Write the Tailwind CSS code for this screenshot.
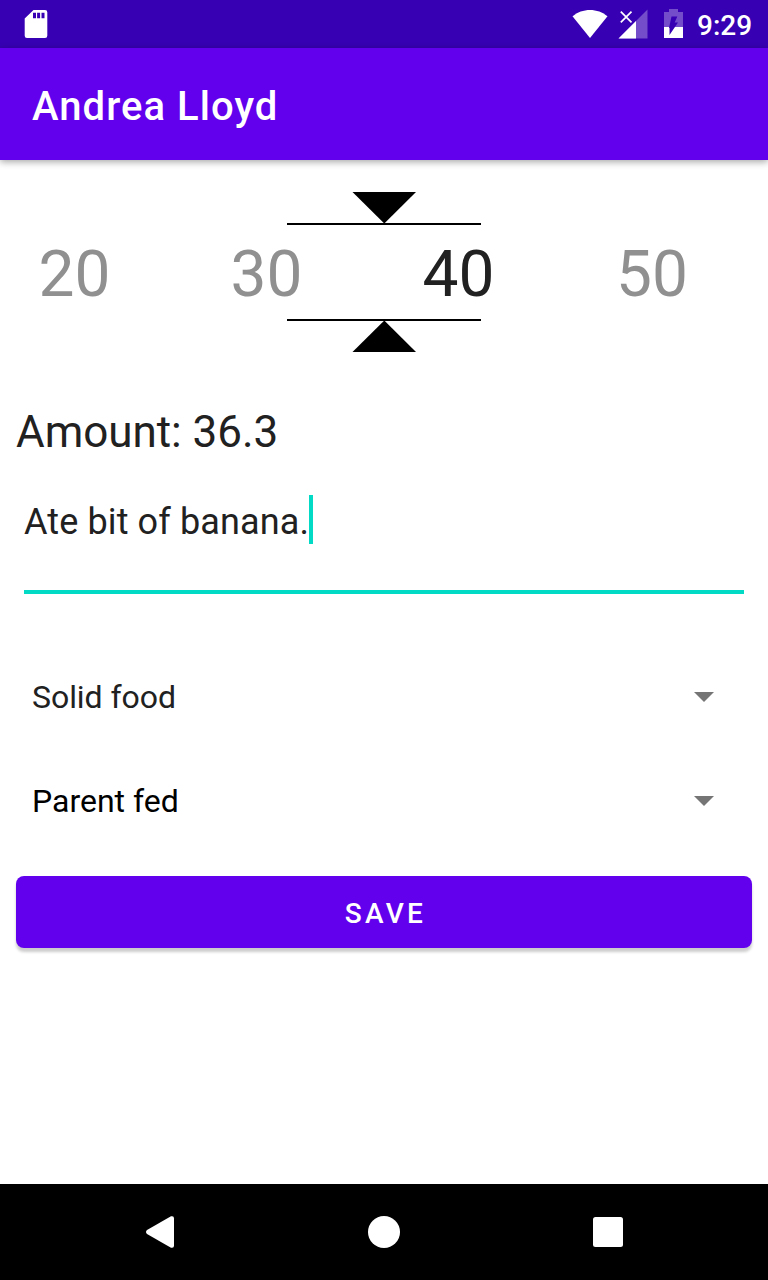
<!DOCTYPE html>
<html lang="en">
<head>
<meta charset="utf-8">
<title>Andrea Lloyd</title>
<script src="https://cdn.jsdelivr.net/npm/@tailwindcss/browser@4"></script>
</head>
<body class="flex h-[1280px] w-[768px] flex-col overflow-hidden bg-white font-['Roboto',sans-serif] text-[#212121]">
  <!-- Status bar -->
  <div class="flex h-12 shrink-0 items-center justify-between bg-[#3700b3] pr-[15px] pl-6 text-white">
    <svg class="h-12 w-6" viewBox="0 0 24 48" fill="currentColor"><path fill-rule="evenodd" d="M9.5 10H21a2.300 2.300 0 0 1 2.300 2.300V35.700A2.300 2.300 0 0 1 21 38H3a2.300 2.300 0 0 1-2.300-2.300V18.500ZM9 12.700v5.600h3v-5.600ZM13.100 12.700v5.600h3v-5.600ZM17.500 12.700v5.600h3v-5.600Z"/></svg>
    <div class="flex items-center">
      <svg class="h-12 w-[125px]" viewBox="572 0 125 48" fill="currentColor">
        <path d="M572.500 16.300C582 7.800 598 7.800 607.500 16.300L590 38Z"/>
        <path opacity=".3" d="M647.500 9.500V38.500H618.500Z"/>
        <path d="M636 21V38.500H618.500Z"/>
        <path d="M620.800 11.700L631.500 22.400M631.500 11.700L620.800 22.400" stroke="currentColor" stroke-width="1.700" fill="none"/>
        <path opacity=".3" d="M664 27V12H669V9H678V12H683V27Z"/>
        <path d="M664 27H683V38H664Z"/>
        <path fill="#3700b3" d="M671.500 16.500H677.300L674.700 22.500H678L669.500 35V28H669Z"/>
      </svg>
      <span class="w-14 pt-[3px] text-[28px] leading-[47px] font-medium whitespace-nowrap">9:29</span>
    </div>
  </div>
  <!-- App bar -->
  <header class="z-10 flex h-28 shrink-0 items-center bg-[#6200ee] px-8 pt-1.5 text-[40px] font-medium tracking-[1.05px] text-white shadow-[0_2px_7px_rgba(0,0,0,0.35)]">Andrea Lloyd</header>

  <main class="flex grow flex-col px-4 pt-8">
    <!-- Amount wheel -->
    <section class="-mx-4 flex flex-col items-center overflow-hidden">
      <svg class="h-[31px] w-16" viewBox="0 0 64 31"><path d="M0.500 0H64L32.300 31.500Z"/></svg>
      <div class="h-0.5 w-[194px] bg-black"></div>
      <div class="flex h-[94px] w-full items-center pt-[5px] text-[64px] leading-[89px] text-[#909090]">
        <span class="-ml-[22px] w-[193px] shrink-0 text-center">20</span>
        <span class="w-[191px] shrink-0 text-center">30</span>
        <span class="w-[193px] shrink-0 text-center text-[#212121]">40</span>
        <span class="w-[194px] shrink-0 text-center">50</span>
      </div>
      <div class="h-0.5 w-[194px] bg-black"></div>
      <svg class="h-[31px] w-16" viewBox="0 0 64 31"><path d="M0.500 31H64L32.300 -0.500Z"/></svg>
    </section>

    <p class="mt-[54px] h-[52px] text-[44px] leading-[52px] tracking-[-0.04px]">Amount: 36.3</p>

    <!-- Note field -->
    <div class="mx-2 mt-[37px] flex h-[99px] items-start border-b-4 border-[#03dac5]">
      <span class="text-[36px] leading-[55px] tracking-[0.12px]">Ate bit of banana.</span>
      <span class="h-[49px] w-1 bg-[#03dac5]"></span>
    </div>

    <!-- Spinners -->
    <div class="mt-[51px] flex h-[104px] items-center justify-between pr-[38px] pl-4 text-[32px]">
      <span class="tracking-[-0.06px]">Solid food</span>
      <svg class="h-2.5 w-5" viewBox="0 0 20 10" fill="#757575"><path d="M0 0H20L10 10Z"/></svg>
    </div>
    <div class="flex h-[104px] items-center justify-between pr-[38px] pl-4 text-[32px] text-black">
      <span>Parent fed</span>
      <svg class="h-2.5 w-5" viewBox="0 0 20 10" fill="#757575"><path d="M0 0H20L10 10Z"/></svg>
    </div>

    <button class="mt-[23px] h-[72px] rounded-lg bg-[#6200ee] pt-1 pl-[3px] text-[28px] font-medium tracking-[3.3px] text-white shadow-[0_4px_3px_rgba(0,0,0,0.2)]">SAVE</button>
  </main>

  <!-- Navigation bar -->
  <nav class="flex h-24 shrink-0 items-center justify-center gap-48 bg-black text-white">
    <svg class="size-8" viewBox="0 0 32 32" fill="currentColor"><path d="M3 14L27 .300Q30 -.500 30 2.500V29.500Q30 32.500 27 31.700L3 18Q1 16 3 14Z"/></svg>
    <svg class="size-8" viewBox="0 0 32 32" fill="currentColor"><circle cx="16" cy="16" r="16"/></svg>
    <svg class="size-8" viewBox="0 0 32 32" fill="currentColor"><rect x="1" y="1" width="30" height="30" rx="2.500"/></svg>
  </nav>
</body>
</html>
